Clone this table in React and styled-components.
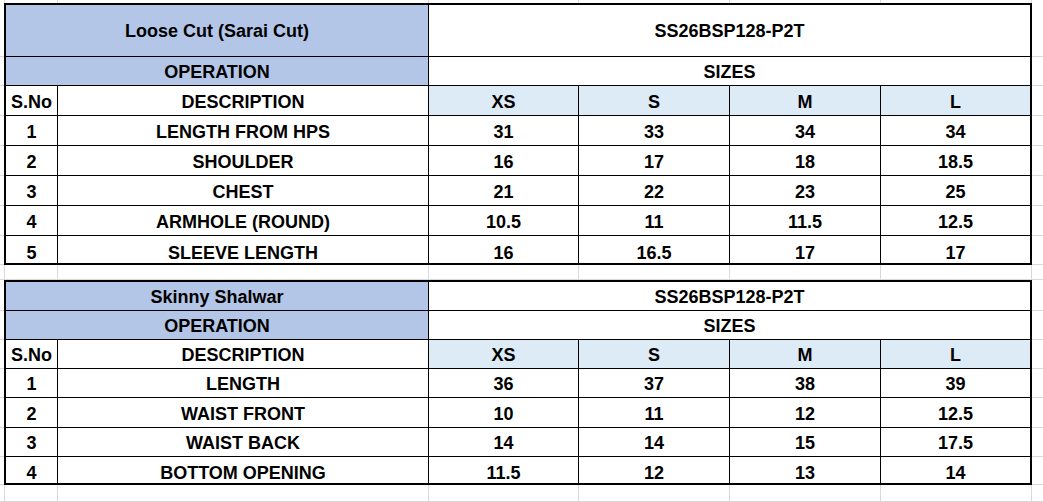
import { Fragment } from "react";
import styled, { createGlobalStyle } from "styled-components";

const BLUE = "#b4c6e7";
const PALE = "#ddebf7";
const GRID = "#d9d9d9";
const SIZES = ["XS", "S", "M", "L"];

const GlobalStyle = createGlobalStyle`
  html, body {
    margin: 0;
    padding: 0;
    background: #fff;
  }
  body {
    font-family: "Liberation Sans", Arial, sans-serif;
  }
`;

const Sheet = styled.div`
  display: grid;
  grid-template-columns: 4px 54px 371px 150px 151px 151px 151px 1fr;
  grid-template-rows:
    3px 54px 29px 30px 30px 30px 30px 30px 29px
    15px 31px 29px 29px 29px 30px 29px 28px 17px;
  width: 1043px;
  height: 502px;
  overflow: hidden;
`;

const Gutter = styled.div`
  border-bottom: ${(p) => (p.$top ? "none" : `1px solid ${GRID}`)};
`;

const BlankCell = styled.div`
  border-right: 1px solid ${GRID};
  border-left: ${(p) => (p.$first ? `1px solid ${GRID}` : "none")};
  border-bottom: ${(p) => (p.$top ? "none" : `1px solid ${GRID}`)};
`;

const Cell = styled.div`
  grid-column: span ${(p) => p.$span || 1};
  display: flex;
  justify-content: center;
  align-items: ${(p) => (p.$middle ? "center" : "flex-end")};
  padding-bottom: ${(p) => (p.$middle ? 0 : p.$lastRow ? 0 : 3)}px;
  background: ${(p) => p.$bg || "#fff"};
  border-top: ${(p) => (p.$firstRow ? "2px solid #000" : "none")};
  border-left: ${(p) => (p.$firstCol ? "2px solid #000" : "none")};
  border-right: ${(p) => (p.$lastCol ? 2 : 1)}px solid #000;
  border-bottom: ${(p) => (p.$lastRow ? 2 : 1)}px solid #000;
  color: #000;
  font-size: 18px;
  font-weight: 700;
  line-height: 20px;
  white-space: nowrap;
`;

const SpacerRow = ({ top }) => (
  <>
    <Gutter $top={top} />
    {[0, 1, 2, 3, 4, 5].map((i) => (
      <BlankCell key={i} $first={i === 0} $top={top} />
    ))}
    <Gutter $top={top} />
  </>
);

const SizeTable = ({ title, code, rows, titleMiddle }) => {
  const last = rows.length - 1;
  return (
    <>
      <Gutter />
      <Cell $span={2} $bg={BLUE} $firstRow $firstCol $middle={titleMiddle}>
        {title}
      </Cell>
      <Cell $span={4} $firstRow $lastCol $middle={titleMiddle}>
        {code}
      </Cell>
      <Gutter />

      <Gutter />
      <Cell $span={2} $bg={BLUE} $firstCol>
        OPERATION
      </Cell>
      <Cell $span={4} $lastCol>
        SIZES
      </Cell>
      <Gutter />

      <Gutter />
      <Cell $firstCol>S.No</Cell>
      <Cell>DESCRIPTION</Cell>
      {SIZES.map((s, i) => (
        <Cell key={s} $bg={PALE} $lastCol={i === 3}>
          {s}
        </Cell>
      ))}
      <Gutter />

      {rows.map(([desc, ...vals], r) => (
        <Fragment key={desc}>
          <Gutter />
          <Cell $firstCol $lastRow={r === last}>
            {r + 1}
          </Cell>
          <Cell $lastRow={r === last}>{desc}</Cell>
          {vals.map((v, i) => (
            <Cell key={i} $lastRow={r === last} $lastCol={i === 3}>
              {v}
            </Cell>
          ))}
          <Gutter />
        </Fragment>
      ))}
    </>
  );
};

const shirt = [
  ["LENGTH FROM HPS", "31", "33", "34", "34"],
  ["SHOULDER", "16", "17", "18", "18.5"],
  ["CHEST", "21", "22", "23", "25"],
  ["ARMHOLE (ROUND)", "10.5", "11", "11.5", "12.5"],
  ["SLEEVE LENGTH", "16", "16.5", "17", "17"],
];

const shalwar = [
  ["LENGTH", "36", "37", "38", "39"],
  ["WAIST FRONT", "10", "11", "12", "12.5"],
  ["WAIST BACK", "14", "14", "15", "17.5"],
  ["BOTTOM OPENING", "11.5", "12", "13", "14"],
];

export default function App() {
  return (
    <>
      <GlobalStyle />
      <Sheet>
        <SpacerRow top />
        <SizeTable
          title="Loose Cut (Sarai Cut)"
          code="SS26BSP128-P2T"
          rows={shirt}
          titleMiddle
        />
        <SpacerRow />
        <SizeTable title="Skinny Shalwar" code="SS26BSP128-P2T" rows={shalwar} />
        <SpacerRow />
      </Sheet>
    </>
  );
}
